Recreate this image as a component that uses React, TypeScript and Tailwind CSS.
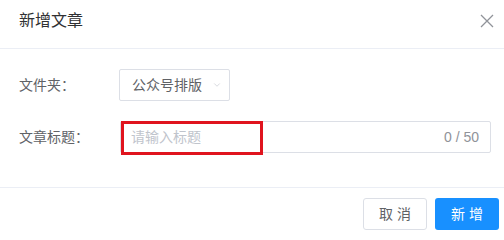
import { ChevronDown } from "lucide-react";

const font = '"Liberation Sans", "Noto Sans CJK SC", sans-serif';

const App = () => {
  return (
    <div
      className="relative w-[504px] h-[232px] bg-white overflow-hidden"
      style={{ fontFamily: font }}
    >
      {/* Header */}
      <div className="h-[49px] pb-[6px] pl-[19px] pr-[10px] flex items-center justify-between border-b border-[#ebeef5]">
        <span className="text-[16px] text-[#303133]">新增文章</span>
        <svg width="14" height="14" viewBox="0 0 14 14" className="block">
          <path d="M1 1 L13 13 M13 1 L1 13" stroke="#909399" strokeWidth="1.3" fill="none" />
        </svg>
      </div>

      {/* Body */}
      <div className="pt-[20px] pb-[34px] flex flex-col gap-[20px]">
        <div className="flex items-center h-[32px]">
          <div className="w-[119px] pl-[19px] text-[14px] text-[#606266]">文件夹：</div>
          <div className="w-[111px] h-[32px] border border-[#dcdfe6] rounded-[2px] flex items-center pl-[12px] gap-[10px]">
            <span className="text-[14px] text-[#606266]">公众号排版</span>
            <ChevronDown className="w-[10px] h-[10px] text-[#c0c4cc]" strokeWidth={1.5} />
          </div>
        </div>

        <div className="flex items-center h-[32px]">
          <div className="w-[120px] pl-[19px] text-[14px] text-[#606266]">文章标题：</div>
          <div className="relative w-[371px] h-[32px] border border-[#dcdfe6] rounded-[2px] flex items-center justify-between pl-[10px] pr-[11px]">
            <span className="text-[14px] text-[#c0c4cc]">请输入标题</span>
            <span className="text-[14px] text-[#909399]">0 / 50</span>
            {/* red annotation box */}
            <div className="absolute left-[0px] top-[-1px] w-[142px] h-[34px] border-[3px] border-[#e0141e]" />
          </div>
        </div>
      </div>

      {/* Footer */}
      <div className="border-t border-[#ebeef5] pt-[10px] pr-[5px] flex justify-end gap-[8px]">
        <button className="w-[64px] h-[32px] border border-[#dcdfe6] rounded-[3px] bg-white text-[14px] text-[#606266]">
          取 消
        </button>
        <button className="w-[64px] h-[32px] rounded-[3px] bg-[#1890ff] text-[14px] text-white">
          新 增
        </button>
      </div>
    </div>
  );
};

export default App;
